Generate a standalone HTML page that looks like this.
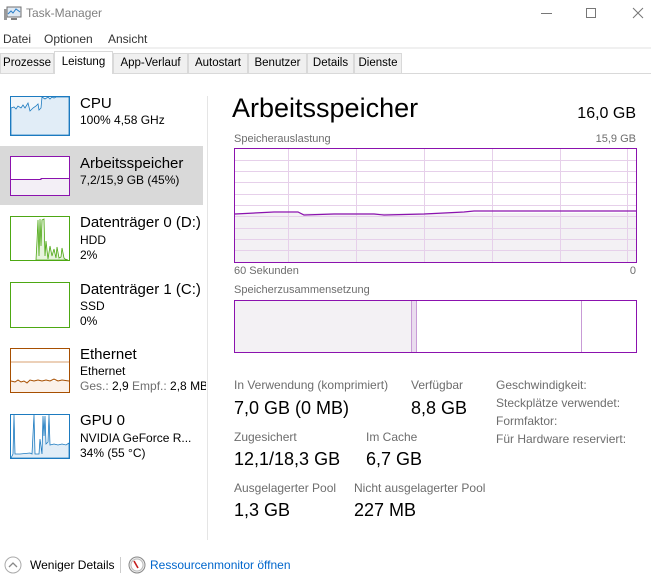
<!DOCTYPE html>
<html><head><meta charset="utf-8"><style>
*{margin:0;padding:0;box-sizing:border-box}
body{width:651px;height:588px;background:#fff;font-family:"Liberation Sans",sans-serif;position:relative;overflow:hidden;color:#000}
.a{position:absolute;white-space:nowrap}
.s{font-size:12px}
.g{color:#6d6d6d}
.tab{position:absolute;top:53px;height:20px;background:#f0f0f0;border:1px solid #d9d9d9;border-bottom:none;font-size:11.5px;text-align:center;line-height:19px}
.th{position:absolute;left:10px;width:60px;height:40px;border:1px solid}
.big{font-size:15px}
.v{font-size:18px}
</style></head><body>
<svg class="a" style="left:4px;top:6px" width="18" height="15" viewBox="0 0 18 15"><rect x="3" y="1" width="14" height="10" fill="#dfe9f3" stroke="#707070"/><polyline points="4,8 7,5 9,7 12,3 16,6" fill="none" stroke="#2a7fc9"/><rect x="0" y="3" width="3" height="11" fill="#9a9a9a"/><rect x="7" y="12" width="6" height="2" fill="#808080"/></svg>
<div class="a s" style="left:26px;top:6px;color:#808080">Task-Manager</div>
<div class="a" style="left:541px;top:13px;width:11px;height:1px;background:#777"></div>
<div class="a" style="left:586px;top:8px;width:10px;height:10px;border:1px solid #777"></div>
<svg class="a" style="left:632px;top:7px" width="12" height="12"><path d="M1 1L11 11M11 1L1 11" stroke="#777"/></svg>
<div class="a s" style="left:3px;top:32px;color:#333">Datei</div>
<div class="a s" style="left:44px;top:32px;color:#333">Optionen</div>
<div class="a s" style="left:108px;top:32px;color:#333">Ansicht</div>
<div class="a" style="left:0;top:47px;width:651px;height:2px;background:#f0f0f0"></div>
<div class="tab" style="left:0;width:54px">Prozesse</div>
<div class="tab" style="left:113px;width:75px">App-Verlauf</div>
<div class="tab" style="left:188px;width:60px">Autostart</div>
<div class="tab" style="left:248px;width:59px">Benutzer</div>
<div class="tab" style="left:307px;width:47px">Details</div>
<div class="tab" style="left:354px;width:48px">Dienste</div>
<div class="a" style="left:0;top:73px;width:651px;height:1px;background:#d9d9d9"></div>
<div class="tab" style="left:54px;top:51px;height:23px;width:59px;background:#fff;line-height:20px">Leistung</div>
<div class="a" style="left:0;top:146px;width:203px;height:59px;background:#d9d9d9"></div>
<div class="a" style="left:207px;top:96px;width:1px;height:444px;background:#e5e5e5"></div>
<svg class="a" style="left:10px;top:96px" width="60" height="40"><rect x="0.5" y="0.5" width="59" height="39" fill="#f1f6fa" stroke="#1d7bc0"/><path d="M1 12L4 11L6 13L8 10L11 12L13 9L15 12L18 7L20 15L23 12L26 10L28 8L29 14L31 12L32 1L35 3L38 1L40 3L42 1L44 2L46 1L59 1L59 39L1 39Z" fill="#e1edf7" stroke="#1d7bc0" stroke-width="0.8"/></svg>
<svg class="a" style="left:10px;top:156px" width="60" height="40"><rect x="0.5" y="0.5" width="59" height="39" fill="#fff" stroke="#8b12ae"/><rect x="1" y="23" width="58" height="16" fill="#f3eff6"/><path d="M1 23.5H31V22.5H59" stroke="#8b12ae" fill="none"/></svg>
<svg class="a" style="left:10px;top:216px" width="60" height="45"><rect x="0.5" y="0.5" width="59" height="44" fill="#fff" stroke="#4da813"/><path d="M26 44L27 25L28 4L29 40L30 3L31 30L32 4L34 3L35 40L36 25L38 43L40 30L42 40L44 33L46 42L47 31L49 42L51 41L52 32L54 42L55 43L58 44Z" fill="#e7f3de" stroke="#4da813" stroke-width="0.8"/></svg>
<svg class="a" style="left:10px;top:282px" width="60" height="46"><rect x="0.5" y="0.5" width="59" height="45" fill="#fff" stroke="#4da813"/></svg>
<svg class="a" style="left:10px;top:348px" width="60" height="45"><rect x="0.5" y="0.5" width="59" height="44" fill="#fff" stroke="#a74f01"/><path d="M1 14H59" stroke="#d9a070"/><rect x="1" y="33" width="58" height="11" fill="#fbf1e9"/><path d="M1 33L5 34L8 32L11 34L14 33L17 35L20 32L24 33L28 32L32 33L36 32L40 33L44 31L48 33L52 32L59 33" stroke="#a74f01" fill="none"/></svg>
<svg class="a" style="left:10px;top:414px" width="60" height="45"><rect x="0.5" y="0.5" width="59" height="44" fill="#fff" stroke="#1d7bc0"/><path d="M1 44L3 40L4 1L5 40L10 40L20 39L22 40L24 1L25 40L29 40L30 25L32 40L33 2L34 22L35 2L36 30L38 28L39 1L40 31L44 30L48 31L52 30L56 31L59 29L59 44Z" fill="#e1edf7" stroke="#1d7bc0" stroke-width="0.8"/></svg>
<div class="a big" style="left:80px;top:95px">CPU</div>
<div class="a s" style="left:80px;top:113px">100% 4,58 GHz</div>
<div class="a big" style="left:80px;top:155px">Arbeitsspeicher</div>
<div class="a s" style="left:80px;top:173px">7,2/15,9 GB (45%)</div>
<div class="a big" style="left:80px;top:214px">Datenträger 0 (D:)</div>
<div class="a s" style="left:80px;top:233px">HDD</div>
<div class="a s" style="left:80px;top:248px">2%</div>
<div class="a big" style="left:80px;top:281px">Datenträger 1 (C:)</div>
<div class="a s" style="left:80px;top:299px">SSD</div>
<div class="a s" style="left:80px;top:314px">0%</div>
<div class="a big" style="left:80px;top:346px">Ethernet</div>
<div class="a s" style="left:80px;top:364px">Ethernet</div>
<div class="a s" style="left:80px;top:379px;width:126px;overflow:hidden"><span class="g">Ges.: </span>2,9 <span class="g">Empf.: </span>2,8 MBit/s</div>
<div class="a big" style="left:80px;top:412px">GPU 0</div>
<div class="a s" style="left:80px;top:431px">NVIDIA GeForce R...</div>
<div class="a s" style="left:80px;top:446px">34% (55 °C)</div>
<div class="a" style="left:232px;top:93px;font-size:27px">Arbeitsspeicher</div>
<div class="a" style="right:15px;top:105px;font-size:16px">16,0 GB</div>
<div class="a g" style="left:234px;top:133px;font-size:11px">Speicherauslastung</div>
<div class="a g" style="right:15px;top:133px;font-size:11px">15,9 GB</div>
<svg class="a" style="left:234px;top:148px" width="403" height="115">
<rect x="1" y="65" width="401" height="49" fill="#f3f1f4"/>
<g stroke="#e6d0ea" stroke-width="1">
<path d="M54.5 1V114M122.5 1V114M190.5 1V114M258.5 1V114M326.5 1V114M393.5 1V114"/>
<path d="M1 12.5H402M1 23.5H402M1 34.5H402M1 46.5H402M1 57.5H402M1 68.5H402M1 80.5H402M1 91.5H402M1 102.5H402"/>
</g>
<path d="M1 66L40 64L55 64L64 64L70 67L100 66L140 66L150 67L190 66L230 64L240 63L402 63" stroke="#8b12ae" fill="none" stroke-width="1.2"/>
<rect x="0.5" y="0.5" width="402" height="114" fill="none" stroke="#8b12ae"/>
</svg>
<div class="a g" style="left:234px;top:265px;font-size:11px">60 Sekunden</div>
<div class="a g" style="right:15px;top:265px;font-size:11px">0</div>
<div class="a g" style="left:234px;top:284px;font-size:11px">Speicherzusammensetzung</div>
<svg class="a" style="left:234px;top:300px" width="403" height="53">
<rect x="1" y="1" width="176" height="51" fill="#f3f1f4"/>
<rect x="177" y="1" width="6" height="51" fill="#eadcef"/>
<path d="M177.5 1V52M182.5 1V52M347.5 1V52" stroke="#c89bd6"/>
<rect x="0.5" y="0.5" width="402" height="52" fill="none" stroke="#8b12ae"/>
</svg>
<div class="a s g" style="left:234px;top:378px">In Verwendung (komprimiert)</div>
<div class="a v" style="left:234px;top:398px">7,0 GB (0 MB)</div>
<div class="a s g" style="left:411px;top:378px">Verfügbar</div>
<div class="a v" style="left:411px;top:398px">8,8 GB</div>
<div class="a s g" style="left:234px;top:430px">Zugesichert</div>
<div class="a v" style="left:234px;top:449px">12,1/18,3 GB</div>
<div class="a s g" style="left:366px;top:430px">Im Cache</div>
<div class="a v" style="left:366px;top:449px">6,7 GB</div>
<div class="a s g" style="left:234px;top:481px">Ausgelagerter Pool</div>
<div class="a v" style="left:234px;top:500px">1,3 GB</div>
<div class="a s g" style="left:354px;top:481px">Nicht ausgelagerter Pool</div>
<div class="a v" style="left:354px;top:500px">227 MB</div>
<div class="a s g" style="left:496px;top:378px">Geschwindigkeit:</div>
<div class="a s g" style="left:496px;top:396px">Steckplätze verwendet:</div>
<div class="a s g" style="left:496px;top:414px">Formfaktor:</div>
<div class="a s g" style="left:496px;top:432px">Für Hardware reserviert:</div>
<svg class="a" style="left:4px;top:556px" width="18" height="18"><circle cx="9" cy="9" r="8" fill="none" stroke="#aaa"/><path d="M5 11L9 7L13 11" fill="none" stroke="#888" stroke-width="1.3"/></svg>
<div class="a s" style="left:30px;top:558px">Weniger Details</div>
<div class="a" style="left:120px;top:557px;width:1px;height:16px;background:#ccc"></div>
<svg class="a" style="left:128px;top:556px" width="18" height="18"><circle cx="9" cy="9" r="8" fill="#eee" stroke="#888"/><circle cx="9" cy="9" r="6" fill="#fff" stroke="#bbb"/><path d="M6 5L10 12" stroke="#c41e1e" stroke-width="1.6"/></svg>
<div class="a s" style="left:150px;top:558px;color:#0066cc">Ressourcenmonitor öffnen</div>
</body></html>
